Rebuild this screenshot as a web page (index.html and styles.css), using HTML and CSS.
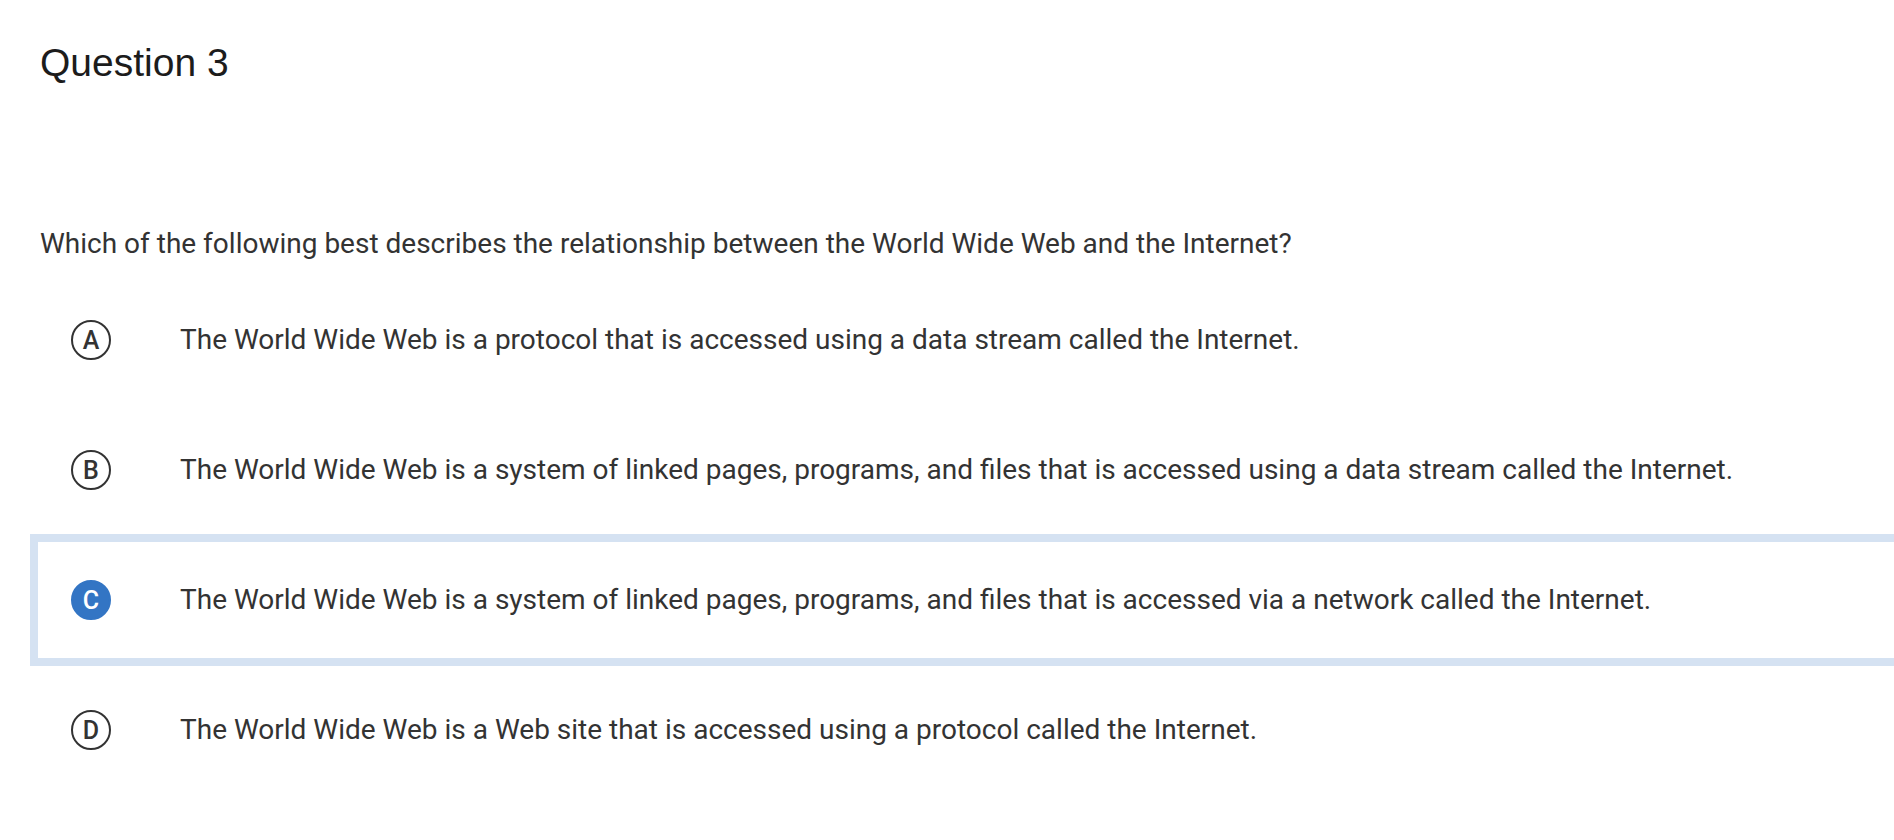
FILE: index.html
```html
<!DOCTYPE html>
<html lang="en">
<head>
<meta charset="utf-8">
<title>Question 3</title>
<link rel="stylesheet" href="styles.css">
</head>
<body>
<main class="page">
  <h1 class="title">Question 3</h1>
  <p class="prompt">Which of the following best describes the relationship between the World Wide Web and the Internet?</p>
  <div class="options">
    <div class="option">
      <span class="badge">A</span>
      <span class="text">The World Wide Web is a protocol that is accessed using a data stream called the Internet.</span>
    </div>
    <div class="option">
      <span class="badge">B</span>
      <span class="text">The World Wide Web is a system of linked pages, programs, and files that is accessed using a data stream called the Internet.</span>
    </div>
    <div class="option selected">
      <span class="badge">C</span>
      <span class="text">The World Wide Web is a system of linked pages, programs, and files that is accessed via a network called the Internet.</span>
    </div>
    <div class="option">
      <span class="badge">D</span>
      <span class="text">The World Wide Web is a Web site that is accessed using a protocol called the Internet.</span>
    </div>
  </div>
</main>
</body>
</html>
```
FILE: styles.css
```css
html, body {
  margin: 0;
  padding: 0;
  background: #ffffff;
  overflow: hidden;
}

.page {
  padding-left: 30px;
}

.title {
  margin: 0;
  padding: 39px 0 0 10px;
  font-family: "Liberation Sans", Arial, sans-serif;
  font-weight: 400;
  font-size: 39px;
  line-height: 48px;
  color: #1c1c1c;
}

.prompt {
  margin: 0;
  padding: 141px 0 0 10px;
  font-family: Roboto, "Liberation Sans", sans-serif;
  font-size: 28px;
  line-height: 32px;
  color: #333333;
}

.options {
  width: 1900px;
  margin-top: 15px;
}

.option {
  display: flex;
  align-items: center;
  box-sizing: border-box;
  height: 130px;
  border: 8px solid transparent;
  padding-left: 33px;
  font-family: Roboto, "Liberation Sans", sans-serif;
  color: #333333;
}

.option.selected {
  height: 132px;
  margin: -1px 0;
  border-color: #d5e2f2;
}

.badge {
  flex: none;
  box-sizing: border-box;
  width: 40px;
  height: 40px;
  border: 2px solid #333333;
  border-radius: 50%;
  display: flex;
  align-items: center;
  justify-content: center;
  font-size: 25px;
  font-weight: 500;
  line-height: 1;
  color: #333333;
}

.selected .badge {
  background: #3375c4;
  border-color: #3375c4;
  color: #ffffff;
}

.text {
  margin-left: 69px;
  font-size: 28px;
  line-height: 32px;
}
```
